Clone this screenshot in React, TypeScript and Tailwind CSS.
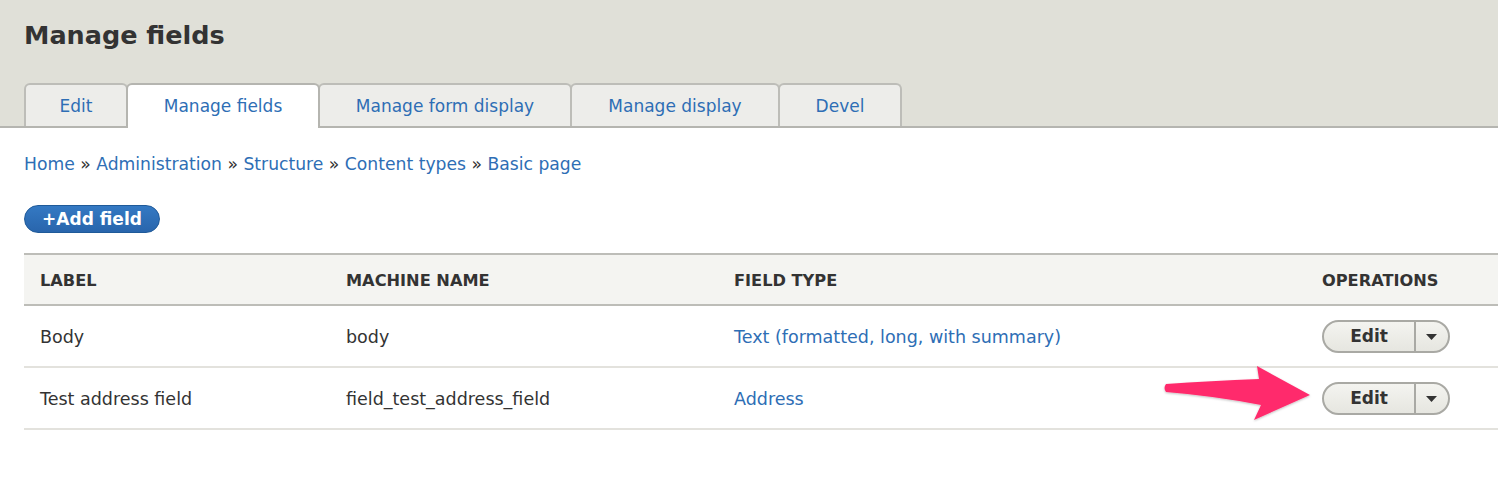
import React from "react";

const tabs = [
  { label: "Edit", w: "w-[104px]", active: false },
  { label: "Manage fields", w: "w-[194px]", active: true },
  { label: "Manage form display", w: "w-[254px]", active: false },
  { label: "Manage display", w: "w-[210px]", active: false },
  { label: "Devel", w: "w-[124px]", active: false },
];

const rows = [
  { label: "Body", machine: "body", type: "Text (formatted, long, with summary)" },
  { label: "Test address field", machine: "field_test_address_field", type: "Address" },
];

function DropButton() {
  return (
    <div className="flex h-[33px] w-[128px] rounded-full border-2 border-[#a9a9a4] bg-gradient-to-b from-[#f4f4f0] to-[#e6e6e0] overflow-hidden">
      <div className="flex w-[90px] items-center justify-center pt-[2px] text-[17px] font-bold text-[#333]">Edit</div>
      <div className="w-[2px] bg-[#a9a9a4]" />
      <div className="flex flex-1 items-center justify-center pr-[2px] pt-[1px]">
        <svg width="11" height="6" viewBox="0 0 11 6">
          <polygon points="0,0 11,0 5.5,6" fill="#333" />
        </svg>
      </div>
    </div>
  );
}

export default function App() {
  return (
    <div className="relative h-[486px] w-[1498px] overflow-hidden bg-white font-['DejaVu_Sans',sans-serif] text-[#333]">
      <header className="border-b-2 border-[#b5b5b0] bg-[#e0e0d8] px-[24px] pt-[20px]">
        <h1 className="text-[25.5px] font-bold leading-[30px] text-[#333]">Manage fields</h1>
        <ul className="mt-[33px] flex items-end">
          {tabs.map((t, i) => (
            <li
              key={t.label}
              className={
                t.active
                  ? `${t.w} relative z-10 -mb-[2px] -ml-[2px] flex h-[45px] items-center justify-center rounded-t-[6px] border-2 border-b-0 border-[#b5b5b0] bg-white pt-[1px] text-[17px] text-[#2e6eb5]`
                  : `${t.w} ${i === 0 ? "" : "-ml-[2px]"} flex h-[43px] items-center justify-center rounded-t-[6px] border-2 border-b-0 border-[#bdbdb8] bg-[#ededea] pt-[2px] text-[17px] text-[#2e6eb5]`
              }
            >
              {t.label}
            </li>
          ))}
        </ul>
      </header>

      <nav className="mt-[24px] px-[24px] text-[17.2px] leading-[24px] text-[#2e6eb5]">
        Home <span className="text-[#333]">»</span> Administration <span className="text-[#333]">»</span> Structure{" "}
        <span className="text-[#333]">»</span> Content types <span className="text-[#333]">»</span> Basic page
      </nav>

      <div className="mt-[29px] px-[24px]">
        <button className="flex h-[28px] w-[136px] items-center justify-center rounded-full border border-[#1f5a99] bg-gradient-to-b from-[#3479c3] to-[#2965ac] pt-[1px] text-[17px] font-bold text-white">
          +Add field
        </button>
      </div>

      <div className="ml-[24px] mt-[20px]">
        <div className="grid h-[53px] grid-cols-[306px_388px_588px_1fr] items-center border-y-2 border-[#bdbdb8] bg-[#f4f4f1] pt-[3px] text-[16.2px] font-bold uppercase text-[#333]">
          <div className="pl-[16px]">Label</div>
          <div className="pl-[16px]">Machine name</div>
          <div className="pl-[16px]">Field type</div>
          <div className="pl-[16px]">Operations</div>
        </div>
        {rows.map((r) => (
          <div
            key={r.label}
            className="grid h-[62px] grid-cols-[306px_388px_588px_1fr] items-center border-b-2 border-[#e3e2dd] text-[17.5px] text-[#333]"
          >
            <div className="pl-[16px] pt-[3px]">{r.label}</div>
            <div className="pl-[16px] pt-[3px]">{r.machine}</div>
            <div className="pl-[16px] pt-[3px] text-[#2e6eb5]">{r.type}</div>
            <div className="pl-[16px]">
              <DropButton />
            </div>
          </div>
        ))}
      </div>

      <svg
        className="absolute left-[1158px] top-[360px]"
        width="160"
        height="66"
        viewBox="1158 360 160 66"
      >
        <defs>
          <filter id="sh" x="-10%" y="-20%" width="120%" height="140%">
            <feDropShadow dx="0" dy="1" stdDeviation="1.2" floodColor="#000" floodOpacity="0.25" />
          </filter>
        </defs>
        <path
          d="M1166 384 Q1210 381 1259 379 L1257 366 L1310 395 L1254 420 L1261 405 Q1215 396 1166 392 Q1163 388 1166 384 Z"
          fill="#ff2c6c"
          filter="url(#sh)"
        />
      </svg>
    </div>
  );
}
